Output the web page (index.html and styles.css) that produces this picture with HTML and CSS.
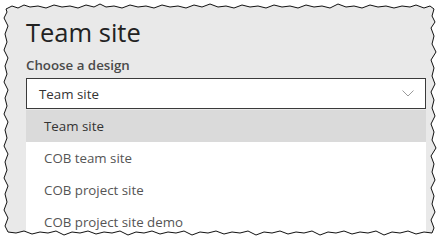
FILE: index.html
```html
<!DOCTYPE html>
<html lang="en">
<head>
    <meta charset="UTF-8">
    <meta name="viewport" content="width=device-width, initial-scale=1.0">
    <title>Team site</title>
    <link rel="stylesheet" href="styles.css">
</head>
<body>
    <div class="panel">
        <h1 class="title">Team site</h1>
        <div class="label">Choose a design</div>

        <div class="select">
            <span>Team site</span>
            <svg class="chevron" width="12" height="7" viewBox="0 0 12 7">
                <path d="M0.5 0.5 L6 6 L11.5 0.5" fill="none" stroke="#9a9a9a" stroke-width="1"/>
            </svg>
        </div>

        <ul class="options">
            <li class="selected">Team site</li>
            <li>COB team site</li>
            <li>COB project site</li>
            <li>COB project site demo</li>
        </ul>

        <!-- torn paper edge -->
        <svg class="torn" width="443" height="239" viewBox="0 0 443 239">
            <path class="torn-mask" fill-rule="evenodd" d="M0,0 H443 V239 H0 Z
                M6,9 L12,6 L18,8 L24,5 L30,7 L38,6 L46,8 L54,5 L62,7 L70,6 L78,8 L86,5 L94,7 L100,4 L106,7 L114,6 L122,8 L130,5 L138,7 L146,6 L154,8 L162,5 L170,7 L178,6 L186,8 L194,5 L202,7 L210,4 L218,7 L226,6 L234,8 L242,5 L250,7 L258,6 L266,8 L274,5 L282,7 L290,6 L298,8 L306,5 L314,7 L322,6 L330,8 L338,4 L346,7 L354,6 L362,8 L370,5 L378,7 L386,6 L394,8 L402,6 L410,7 L416,5 L424,8 L430,6 L434,9
                L432,16 L435,22 L431,28 L434,36 L432,44 L436,52 L431,60 L434,68 L432,76 L435,84 L431,92 L434,100 L432,108 L435,116 L431,124 L434,132 L432,140 L436,148 L431,156 L434,164 L432,172 L435,180 L431,188 L434,196 L432,204 L435,212 L431,220 L434,228 L432,233
                L424,232 L416,234 L408,231 L400,233 L392,232 L384,235 L376,231 L368,233 L360,232 L352,234 L344,231 L336,233 L328,232 L320,235 L312,231 L304,233 L296,232 L288,234 L280,231 L272,233 L264,232 L256,235 L248,231 L240,233 L232,232 L224,234 L216,231 L208,233 L200,232 L192,235 L184,231 L176,233 L168,232 L160,234 L152,231 L144,233 L136,232 L128,235 L120,231 L112,233 L104,232 L96,234 L88,231 L80,233 L72,232 L64,235 L56,231 L48,233 L40,232 L32,234 L24,231 L16,233 L8,232
                L5,226 L8,218 L4,210 L7,202 L5,194 L8,186 L4,178 L7,170 L5,162 L8,154 L4,146 L7,138 L5,130 L8,122 L4,114 L7,106 L5,98 L8,90 L4,82 L7,74 L5,66 L8,58 L4,50 L7,42 L5,34 L8,26 L4,18 L7,12 Z"/>
            <path class="torn-line" d="M6,9 L12,6 L18,8 L24,5 L30,7 L38,6 L46,8 L54,5 L62,7 L70,6 L78,8 L86,5 L94,7 L100,4 L106,7 L114,6 L122,8 L130,5 L138,7 L146,6 L154,8 L162,5 L170,7 L178,6 L186,8 L194,5 L202,7 L210,4 L218,7 L226,6 L234,8 L242,5 L250,7 L258,6 L266,8 L274,5 L282,7 L290,6 L298,8 L306,5 L314,7 L322,6 L330,8 L338,4 L346,7 L354,6 L362,8 L370,5 L378,7 L386,6 L394,8 L402,6 L410,7 L416,5 L424,8 L430,6 L434,9
                L432,16 L435,22 L431,28 L434,36 L432,44 L436,52 L431,60 L434,68 L432,76 L435,84 L431,92 L434,100 L432,108 L435,116 L431,124 L434,132 L432,140 L436,148 L431,156 L434,164 L432,172 L435,180 L431,188 L434,196 L432,204 L435,212 L431,220 L434,228 L432,233
                L424,232 L416,234 L408,231 L400,233 L392,232 L384,235 L376,231 L368,233 L360,232 L352,234 L344,231 L336,233 L328,232 L320,235 L312,231 L304,233 L296,232 L288,234 L280,231 L272,233 L264,232 L256,235 L248,231 L240,233 L232,232 L224,234 L216,231 L208,233 L200,232 L192,235 L184,231 L176,233 L168,232 L160,234 L152,231 L144,233 L136,232 L128,235 L120,231 L112,233 L104,232 L96,234 L88,231 L80,233 L72,232 L64,235 L56,231 L48,233 L40,232 L32,234 L24,231 L16,233 L8,232
                L5,226 L8,218 L4,210 L7,202 L5,194 L8,186 L4,178 L7,170 L5,162 L8,154 L4,146 L7,138 L5,130 L8,122 L4,114 L7,106 L5,98 L8,90 L4,82 L7,74 L5,66 L8,58 L4,50 L7,42 L5,34 L8,26 L4,18 L7,12 Z"/>
        </svg>
    </div>
</body>
</html>
```

FILE: styles.css
```css
body {
    margin: 0;
    background: #fff;
    font-family: "Open Sans", "Noto Sans", sans-serif;
}

.panel {
    position: relative;
    width: 443px;
    height: 239px;
    box-sizing: border-box;
    padding: 14px 0 0 26px;
    background: #e9e9e9;
    overflow: hidden;
}

.title {
    margin: 0;
    font-size: 25.5px;
    font-weight: 400;
    line-height: 36px;
    color: #222;
}

.label {
    margin-top: 5px;
    font-size: 13.3px;
    font-weight: 600;
    line-height: 20px;
    color: #4a4a4a;
}

.select {
    display: flex;
    align-items: center;
    justify-content: space-between;
    width: 400px;
    height: 31px;
    box-sizing: border-box;
    margin-top: 3px;
    padding: 0 11px 0 12px;
    background: #fff;
    border: 1px solid #3a3a3a;
    font-size: 13.3px;
    color: #333;
}

.options {
    list-style: none;
    margin: 1px 0 0;
    padding: 0;
    width: 400px;
    background: #fff;
}

.options li {
    height: 32px;
    line-height: 32px;
    padding-left: 18px;
    font-size: 13.3px;
    color: #555;
}

.options li.selected {
    background: #dadada;
    color: #333;
}

/* Torn edge overlay */
.torn {
    position: absolute;
    top: 0;
    left: 0;
}

.torn-mask {
    fill: #fff;
}

.torn-line {
    fill: none;
    stroke: #111;
    stroke-width: 1;
}
```
